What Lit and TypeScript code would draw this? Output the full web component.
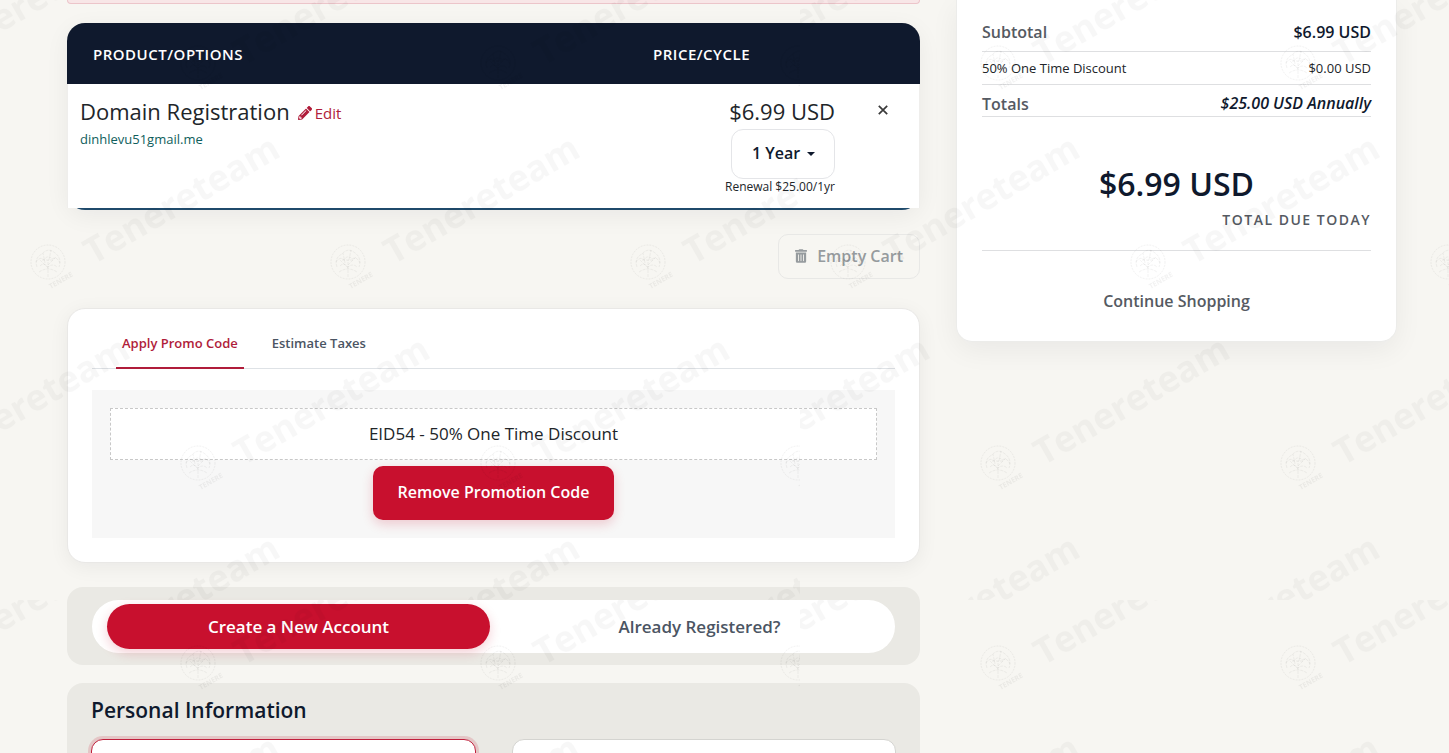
import { LitElement, html, css, svg } from "lit";
import { customElement, state } from "lit/decorators.js";
import { classMap } from "lit/directives/class-map.js";

const MARKS: Array<[number, number]> = [
  [-102, 65], [198, 65], [498, 65], [798, 65],
  [48, 264], [348, 264], [648, 264],
  [-102, 465], [198, 465], [498, 465], [798, 465],
  [48, 664], [348, 664], [648, 664],
];

@customElement("brand-watermark")
export class BrandWatermark extends LitElement {
  static styles = css`
    :host {
      position: fixed;
      inset: 0;
      pointer-events: none;
      z-index: 5;
    }
    svg {
      display: block;
      width: 100%;
      height: 100%;
    }
    .word {
      font-family: "Open Sans", sans-serif;
      font-weight: 700;
      font-size: 36px;
      fill: #000;
      fill-opacity: 0.03;
    }
    .tiny {
      font-family: "Open Sans", sans-serif;
      font-weight: 700;
      font-size: 7px;
      fill: #000;
      fill-opacity: 0.05;
    }
    .ring {
      fill: none;
      stroke: #000;
      stroke-opacity: 0.045;
      stroke-width: 1;
    }
  `;

  render() {
    return html`
      <svg aria-hidden="true">
        <defs>
          <pattern id="tile" width="800" height="600" patternUnits="userSpaceOnUse">
            ${MARKS.map(
              ([x, y]) => svg`
                <g transform="translate(${x} ${y})">
                  <circle class="ring" r="17" cy="-2" stroke-dasharray="2 1"></circle>
                  <path class="ring" stroke-dasharray="3 1" d="M0 13V-4M0 4L-8-4M0 1L8-7M-3-1L-5-11M1-4L3-14M-11 3Q-14-6-6-10Q0-17 7-11Q14-6 11 3M-9 8Q0 2 9 8M-6-4H6M-12-2Q-8-8-4-4Q0-10 4-5Q9-8 12-1M-8 2Q-4-2 0 3Q5-1 9 3"></path>
                  <text class="tiny" transform="rotate(-30)" x="-10" y="23">TENERE</text>
                  <text class="word" transform="translate(45 1) rotate(-30)">Tenereteam</text>
                </g>`,
            )}
          </pattern>
        </defs>
        <rect width="100%" height="100%" fill="url(#tile)"></rect>
      </svg>
    `;
  }
}

@customElement("app-root")
export class AppRoot extends LitElement {
  @state() private tab: "promo" | "tax" = "promo";
  @state() private mode: "new" | "existing" = "new";

  static styles = css`
    :host {
      display: block;
      height: 100vh;
      overflow-y: auto;
      scrollbar-width: none;
      background: #f7f6f2;
      color: #212529;
      font-family: "Open Sans", sans-serif;
      font-size: 16px;
      line-height: 24px;
    }
    * {
      box-sizing: border-box;
    }
    button, select, input {
      font: inherit;
      color: inherit;
      margin: 0;
    }
    button {
      cursor: pointer;
    }
    a {
      text-decoration: none;
      color: inherit;
    }
    h2, h3, p {
      margin: 0;
      font-weight: inherit;
      font-size: inherit;
    }
    .page {
      display: grid;
      grid-template-columns: minmax(0, 1fr) 441px;
      gap: 36px;
      align-items: start;
      padding: 0 52px 0 67px;
    }
    .alert {
      height: 4px;
      background: #f8e6e7;
      border: 1px solid #ecc5ca;
      border-top: 0;
      border-radius: 0 0 6px 6px;
    }
    .cart {
      margin-top: 19px;
      border-bottom: 2px solid #1f4a6b;
      border-radius: 18px;
      box-shadow: 0 6px 24px rgba(15, 23, 42, 0.06);
    }
    table {
      width: 100%;
      table-layout: fixed;
      border-collapse: separate;
      border-spacing: 0;
    }
    .col-price {
      width: 207px;
    }
    .col-remove {
      width: 73px;
    }
    th {
      height: 61px;
      padding: 0 13px;
      background: #0f192d;
      color: #fff;
      font-size: 15px;
      font-weight: 600;
      letter-spacing: 0.5px;
      text-align: left;
    }
    th:first-child {
      padding-left: 26px;
      border-top-left-radius: 18px;
    }
    th:last-child {
      border-top-right-radius: 18px;
    }
    td {
      padding: 11px 12px;
      background: #fff;
      vertical-align: top;
    }
    tbody td:first-child {
      border-left: 1px solid #efeeec;
    }
    tbody td:last-child {
      border-right: 1px solid #efeeec;
    }
    .item {
      display: flex;
      align-items: baseline;
      gap: 8px;
      font-size: 22px;
      line-height: 32px;
    }
    .edit {
      display: inline-flex;
      align-items: center;
      gap: 3px;
      color: #b01c3a;
      font-size: 15px;
      line-height: 20px;
    }
    .domain {
      color: #0f5e5c;
      font-size: 13px;
      line-height: 24px;
    }
    .price-cell {
      padding-bottom: 13px;
      text-align: right;
    }
    .price {
      padding-bottom: 2px;
      font-size: 22px;
      line-height: 32px;
    }
    .cycle {
      display: inline-grid;
      align-items: center;
      height: 50px;
    }
    .cycle select, .cycle svg {
      grid-area: 1 / 1;
    }
    .cycle select {
      appearance: none;
      height: 50px;
      width: 104px;
      padding: 0 20px 2px;
      border: 1px solid #e4e5e8;
      border-radius: 12px;
      background: #fff;
      color: #0f192d;
      font-weight: 600;
    }
    .cycle svg {
      justify-self: end;
      margin-right: 20px;
      pointer-events: none;
    }
    .renewal {
      font-size: 12px;
      line-height: 16px;
    }
    .remove {
      display: block;
      margin: 6px auto 0 15px;
      padding: 4px;
      border: 0;
      background: none;
      line-height: 0;
    }
    .cart-actions {
      display: flex;
      justify-content: flex-end;
      margin-top: 24px;
    }
    .empty {
      display: flex;
      align-items: center;
      gap: 10px;
      height: 45px;
      padding: 0 16px 2px;
      border: 1px solid #e8e8e6;
      border-radius: 10px;
      background: none;
      color: #969b9e;
      font-weight: 600;
    }
    .promo {
      margin-top: 29px;
      padding: 24px;
      background: #fff;
      border: 1px solid #e9e8e6;
      border-radius: 18px;
      box-shadow: 0 4px 20px rgba(15, 23, 42, 0.06);
    }
    .tabs {
      display: flex;
      gap: 22px;
      padding-left: 24px;
      border-bottom: 1px solid #dee2e6;
    }
    .tab {
      margin-bottom: -1px;
      padding: 0 6px 14px;
      border: 0;
      border-bottom: 2px solid transparent;
      background: none;
      color: #4b5563;
      font-size: 13px;
      font-weight: 600;
      line-height: 20px;
    }
    .tab.active {
      color: #b01c3a;
      border-bottom-color: #b01c3a;
    }
    .panel {
      display: flex;
      flex-direction: column;
      align-items: center;
      gap: 6px;
      margin-top: 21px;
      padding: 18px;
      background: #f7f7f7;
    }
    .code {
      align-self: stretch;
      padding: 13px;
      border: 1px dashed #c8c8c8;
      background: #fff;
      font-size: 17px;
      text-align: center;
    }
    .primary {
      height: 54px;
      padding: 0 25px 2px;
      border: 0;
      border-radius: 10px;
      background: #c8102e;
      color: #fff;
      font-weight: 600;
      box-shadow: 0 4px 12px rgba(200, 16, 46, 0.2);
    }
    .box {
      background: #eae9e4;
      border-radius: 16px;
      padding: 11px 24px;
    }
    .account {
      margin-top: 24px;
      padding: 13px 25px 12px;
    }
    .switch {
      display: grid;
      grid-template-columns: 1fr 1fr;
      gap: 18px;
      padding: 4px 4px 4px 15px;
      border-radius: 27px;
      background: #fff;
    }
    .choice {
      height: 45px;
      border: 0;
      border-radius: 23px;
      background: none;
      color: #4b5563;
      font-size: 17px;
      font-weight: 600;
    }
    .choice.active {
      background: #c8102e;
      color: #fff;
      box-shadow: 0 4px 12px rgba(200, 16, 46, 0.2);
    }
    .personal {
      margin-top: 18px;
    }
    .personal h2 {
      color: #0f192d;
      font-size: 21px;
      font-weight: 600;
      line-height: 32px;
    }
    .fields {
      display: grid;
      grid-template-columns: 1fr 1fr;
      gap: 36px;
      margin-top: 13px;
    }
    .field {
      width: 100%;
      height: 48px;
      border: 1px solid #d4d4d0;
      border-radius: 12px;
      background: #fff;
      padding: 0 16px;
      outline: 0;
    }
    .field.focused {
      border-color: #c0203c;
      box-shadow: 0 0 0 3px rgba(200, 16, 46, 0.16);
    }
    .summary {
      padding: 13px 25px 24px;
      background: #fff;
      border: 1px solid #ececea;
      border-top: 0;
      border-radius: 0 0 16px 16px;
      box-shadow: 0 8px 28px rgba(15, 23, 42, 0.06);
    }
    .row {
      display: flex;
      justify-content: space-between;
      align-items: center;
      border-bottom: 1px solid #dedfe1;
      color: #0f192d;
      font-weight: 600;
    }
    .row .name {
      color: #555a62;
    }
    .subtotal {
      padding: 7px 0;
    }
    .discount {
      padding: 6px 0;
      color: #212529;
      font-size: 13px;
      font-weight: 400;
      line-height: 20px;
    }
    .totals {
      padding: 7px 0 0;
    }
    .recurring {
      padding-bottom: 2px;
      font-style: italic;
      line-height: 22px;
    }
    .due {
      display: flex;
      flex-direction: column;
      padding: 43px 0 18px;
      border-bottom: 1px solid #dedfe1;
    }
    .amount {
      align-self: center;
      color: #0f192d;
      font-size: 32px;
      font-weight: 600;
      line-height: 48px;
    }
    .caption {
      align-self: flex-end;
      color: #555a62;
      font-size: 14px;
      font-weight: 600;
      letter-spacing: 1.5px;
    }
    .continue {
      display: block;
      margin-top: 34px;
      padding: 4px 0;
      color: #555a62;
      font-weight: 600;
      text-align: center;
    }
  `;

  private tabButton(id: "promo" | "tax", text: string) {
    return html`<button
      type="button"
      role="tab"
      aria-selected=${this.tab === id}
      class=${classMap({ tab: true, active: this.tab === id })}
      @click=${() => (this.tab = id)}
    >${text}</button>`;
  }

  private choiceButton(id: "new" | "existing", text: string) {
    return html`<button
      type="button"
      aria-pressed=${this.mode === id}
      class=${classMap({ choice: true, active: this.mode === id })}
      @click=${() => (this.mode = id)}
    >${text}</button>`;
  }

  render() {
    return html`
      <div class="page">
        <main>
          <div class="alert"></div>
          <section class="cart">
            <table>
              <colgroup>
                <col />
                <col class="col-price" />
                <col class="col-remove" />
              </colgroup>
              <thead>
                <tr><th scope="col">PRODUCT/OPTIONS</th><th scope="col">PRICE/CYCLE</th><th></th></tr>
              </thead>
              <tbody>
                <tr>
                  <td>
                    <div class="item">
                      <span>Domain Registration</span>
                      <a class="edit" href="#edit">
                        <svg width="14" height="14" viewBox="0 0 512 512" fill="currentColor" aria-hidden="true">
                          <path d="M498 142l-46 46c-5 5-13 5-17 0L324 77c-5-5-5-12 0-17l46-46c19-19 49-19 68 0l60 60c19 19 19 49 0 68zm-214-42L22 362 0 484c-3 16 12 30 28 28l122-22 262-262c5-5 5-13 0-17L301 100c-4-5-12-5-17 0zM124 340c-5-6-5-14 0-20l154-154c6-5 14-5 20 0s5 14 0 20L144 340c-6 5-14 5-20 0zm-36 84h48v36l-64 12-32-31 12-65h36v48z"></path>
                        </svg>
                        Edit
                      </a>
                    </div>
                    <div class="domain">dinhlevu51gmail.me</div>
                  </td>
                  <td class="price-cell">
                    <div class="price">$6.99 USD</div>
                    <div class="cycle">
                      <select aria-label="Billing cycle">
                        <option>1 Year</option>
                        <option>2 Years</option>
                        <option>3 Years</option>
                      </select>
                      <svg width="8" height="4" viewBox="0 0 8 4" aria-hidden="true"><path d="M0 0h8L4 4z" fill="#0f192d"></path></svg>
                    </div>
                    <div class="renewal">Renewal $25.00/1yr</div>
                  </td>
                  <td>
                    <button class="remove" type="button" aria-label="Remove item">
                      <svg width="10" height="10" viewBox="0 0 10 10" fill="none" stroke="#3a3a3a" stroke-width="1.7" aria-hidden="true"><path d="M.8.8l8.4 8.4M9.2.8L.8 9.2"></path></svg>
                    </button>
                  </td>
                </tr>
              </tbody>
            </table>
          </section>

          <div class="cart-actions">
            <button class="empty" type="button">
              <svg width="12" height="14" viewBox="0 0 448 512" fill="currentColor" aria-hidden="true">
                <path d="M32 464a48 48 0 0 0 48 48h288a48 48 0 0 0 48-48V128H32zm272-256a16 16 0 0 1 32 0v224a16 16 0 0 1-32 0zm-96 0a16 16 0 0 1 32 0v224a16 16 0 0 1-32 0zm-96 0a16 16 0 0 1 32 0v224a16 16 0 0 1-32 0zM432 32H312l-9-19A24 24 0 0 0 281 0H167a24 24 0 0 0-22 13l-9 19H16A16 16 0 0 0 0 48v32a16 16 0 0 0 16 16h416a16 16 0 0 0 16-16V48a16 16 0 0 0-16-16z"></path>
              </svg>
              Empty Cart
            </button>
          </div>

          <section class="promo">
            <div class="tabs" role="tablist">
              ${this.tabButton("promo", "Apply Promo Code")}
              ${this.tabButton("tax", "Estimate Taxes")}
            </div>
            <div class="panel">
              <div class="code">EID54 - 50% One Time Discount</div>
              <button class="primary" type="button">Remove Promotion Code</button>
            </div>
          </section>

          <section class="box account">
            <div class="switch">
              ${this.choiceButton("new", "Create a New Account")}
              ${this.choiceButton("existing", "Already Registered?")}
            </div>
          </section>

          <section class="box personal">
            <h2>Personal Information</h2>
            <div class="fields">
              <input class="field focused" type="text" aria-label="First Name" />
              <input class="field" type="text" aria-label="Last Name" />
            </div>
          </section>
        </main>

        <aside class="summary">
          <div class="row subtotal"><span class="name">Subtotal</span><span>$6.99 USD</span></div>
          <div class="row discount"><span>50% One Time Discount</span><span>$0.00 USD</span></div>
          <div class="row totals"><span class="name">Totals</span><span class="recurring">$25.00 USD Annually</span></div>
          <div class="due">
            <span class="amount">$6.99 USD</span>
            <span class="caption">TOTAL DUE TODAY</span>
          </div>
          <a class="continue" href="#shop">Continue Shopping</a>
        </aside>
      </div>
      <brand-watermark></brand-watermark>
    `;
  }
}
